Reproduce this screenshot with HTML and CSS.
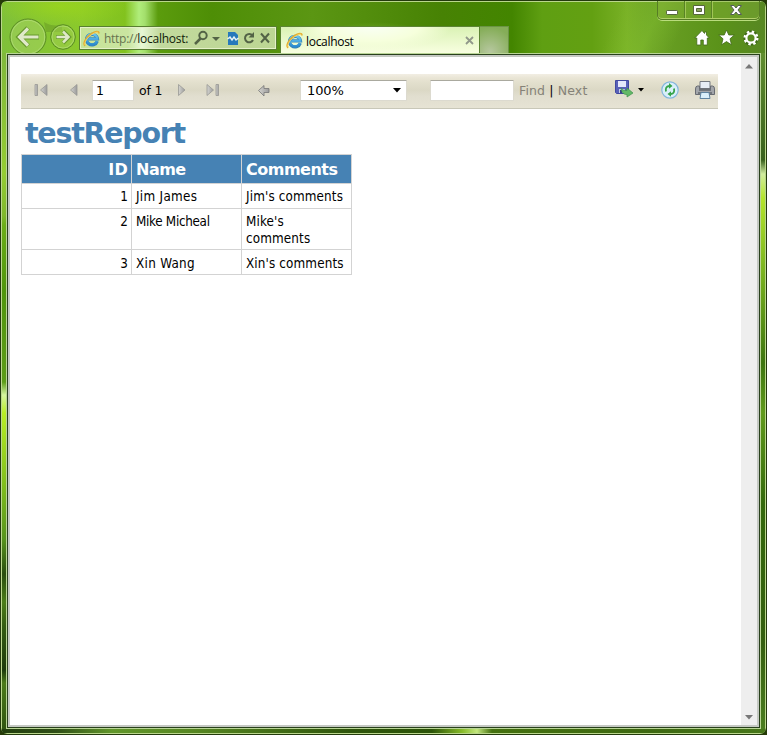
FILE: index.html
```html
<!DOCTYPE html>
<html lang="en">
<head>
<meta charset="utf-8">
<title>localhost</title>
<link rel="stylesheet" href="styles.css">
</head>
<body>
<svg width="0" height="0" class="defs">
  <defs>
    <linearGradient id="ie-blue" x1="0" y1="0" x2="0" y2="1"><stop offset="0" stop-color="#6cc8f2"/><stop offset="1" stop-color="#2b8bd0"/></linearGradient>
    <linearGradient id="metal"><stop offset="0" stop-color="#d4d4d0"/><stop offset="1" stop-color="#9b9b9b"/></linearGradient>
    <symbol id="ie" viewBox="0 0 17 17">
      <path d="M14.300 11.200A5.500 5.300 0 1 1 14.500 8.900H5.400" fill="none" stroke="#3584b7" stroke-width="3.200"/>
      <path d="M14 11A5.300 5.200 0 1 1 14.300 8.900H5.400" fill="none" stroke="url(#ie-blue)" stroke-width="2.200"/>
      <path d="M2.200 15.700C-.5 14 2.500 7.500 8 4 12.500 1 16.200.7 15.800 3.500" fill="none" stroke="#e3ae2e" stroke-width="1.700"/>
      <path d="M2 14.800C1 12.500 4.500 7.500 8.500 4.800 12 2.300 14.800 1.600 15.300 2.700" fill="none" stroke="#ffe379" stroke-width=".7"/>
    </symbol>
  </defs>
</svg>
<div class="window">
  <header class="chrome">
    <nav class="nav">
      <svg class="history" width="70" height="46" viewBox="0 0 70 46">
        <path d="M36 15q8 5 18 3v7H38z" fill="#6a9a25" opacity=".55"/>
        <circle cx="20" cy="30" r="18" fill="#a8d466" fill-opacity=".5" stroke="#598b24"/>
        <circle cx="20" cy="30" r="16.700" fill="none" stroke="#c4e891" stroke-opacity=".5"/>
        <circle cx="55" cy="30" r="12.300" fill="#a0cd52" fill-opacity=".5" stroke="#598b24"/>
        <circle cx="55" cy="30" r="11" fill="none" stroke="#c4e891" stroke-opacity=".5"/>
        <path d="M31 30H12M20 21l-9 9 9 9" fill="none" stroke="#67992c" stroke-width="5"/>
        <path d="M30.500 30H12M20 21.500L11.500 30l8.500 8.500" fill="none" stroke="#dfe9c8" stroke-width="3.200"/>
        <path d="M48 30h12M55 24l6 6-6 6" fill="none" stroke="#67992c" stroke-width="4"/>
        <path d="M48.500 30H60M55 24.500l5.500 5.500-5.500 5.500" fill="none" stroke="#dfe9c8" stroke-width="2.500"/>
      </svg>
      <div class="address">
        <svg width="17" height="17"><use href="#ie"/></svg>
        <span class="url">http://<b>localhost:</b></span>
        <svg class="tools" width="80" height="18" viewBox="0 0 80 18" fill="none" stroke="#536346" stroke-width="2">
          <circle cx="9" cy="6.500" r="3.700"/><path d="M6.500 9.500L1 15" stroke-width="2.500"/>
          <path d="M18 8h8l-4 4z" fill="#536346" stroke="none"/>
          <path d="M34 3h7l3 3v10H34z" fill="#2679bb" stroke="none"/><path d="M33.500 10l2.500-2 2 3 2-3 2 3 2.500-2" stroke="#e5f2f5" stroke-width="1.500"/>
          <path d="M58.500 6.500A4.200 4.200 0 1 0 59 11"/><path d="M60 3v5.500h-5.500z" fill="#536346" stroke="none"/>
          <path d="M67 4.500l8 9M75 4.500l-8 9"/>
        </svg>
      </div>
    </nav>
    <div class="tab">
      <svg width="17" height="17"><use href="#ie"/></svg>
      <span>localhost</span>
      <svg width="9" height="9" viewBox="0 0 9 9"><path d="M1 1l7 7M8 1L1 8" stroke="#91988a" stroke-width="1.800"/></svg>
    </div>
    <div class="new-tab"></div>
    <div class="controls">
      <div class="caption">
        <svg width="103" height="20" viewBox="0 0 103 20">
          <path d="M27.500 0v18M54.500 0v18" stroke="#598326"/><path d="M28.500 0v18M55.500 0v18" stroke="#b5d46c" opacity=".7"/>
          <rect x="9.500" y="10.500" width="11" height="4" rx=".7" fill="#fff" stroke="#56663d"/>
          <path d="M36.500 5.500h11v9h-11z" fill="#fff" stroke="#56663d"/><path d="M39.500 8.500h5v3h-5z" fill="#8da263" stroke="#56663d"/>
          <path d="M73.500 5.500h3.500l2 2.500 2-2.500h3.500l-3.500 4.500 3.500 4.500H81L79 12l-2 2.500h-3.500L77 10z" fill="#fff" stroke="#555e59"/>
        </svg>
      </div>
      <svg class="actions" width="66" height="18" viewBox="0 0 66 18" fill="#fff" stroke="#416b19" stroke-width=".8">
        <path d="M8 1.500L.8 9h2v7h4v-5h2.500v5h4V9h2L12.500 6V3h-2v1.500z"/>
        <path d="M32.500 1l2.300 5h5.500L36 9.800l1.500 6-5-3.200-5 3.200 1.500-6L24.700 6h5.500z"/>
        <circle cx="57" cy="9" r="5.700" fill="none" stroke="#416b19" stroke-width="4"/>
        <circle cx="57" cy="9" r="6.300" fill="none" stroke="#fff" stroke-width="2.400" stroke-dasharray="2.400 2.548"/>
        <circle cx="57" cy="9" r="4.600" fill="none" stroke="#fff" stroke-width="2.200"/>
      </svg>
    </div>
  </header>
  <div class="edge edge-left"></div>
  <div class="viewport">
    <main class="report">
      <div class="toolbar">
        <svg class="pager" width="46" height="16" viewBox="0 0 46 16" fill="url(#metal)" stroke="#989894" stroke-width=".8">
          <path d="M3 2.500h2.500v11H3z"/><path d="M15 2.500v11L8.500 8z"/><path d="M45 2.500v11L38.500 8z"/>
        </svg>
        <div class="field page">1</div>
        <span class="of">of 1</span>
        <svg class="pager-next" width="94" height="16" viewBox="0 0 94 16" fill="url(#metal)" stroke="#989894" stroke-width=".8">
          <path d="M2.500 2.500v11L9 8z"/><path d="M31 2.500v11L37.500 8z"/><path d="M40 2.500h2.500v11H40z"/>
          <path d="M82.500 8.500l5.500-5v3h5v4h-5v3.500z" stroke="#777"/>
        </svg>
        <div class="field zoom"><span>100%</span><svg width="8" height="5" viewBox="0 0 8 5"><path d="M0 0h8L4 4.500z"/></svg></div>
        <div class="field search"></div>
        <span class="find">Find <b>|</b> Next</span>
        <svg class="export" width="104" height="22" viewBox="0 0 104 22">
          <path d="M1.500 1.500h13v13h-12l-1-1z" fill="#5961b8" stroke="#4149a0"/><path d="M4 2h8v6H4z" fill="#e5e8fb"/><path d="M5 10h6v4H5z" fill="#c6cde5"/><path d="M6 11h2v3H6z" fill="#384183"/>
          <path d="M7 9q2 3 6 2.500V9l6 5-6 4v-2.500Q8 16 7 9z" fill="#63b967" stroke="#3c934c" stroke-width=".7"/>
          <path d="M24 9h6l-3 3.500z"/>
          <circle cx="56" cy="11" r="8.200" fill="#d9effa" stroke="#84b6dc" stroke-width="1.200"/>
          <path d="M52 12.500Q51 7.500 55 7M60 9.500Q61 14.500 57 15" fill="none" stroke="#36a44a" stroke-width="1.800"/>
          <path d="M55 4l3.500 3L55 9.800zM57 12.200v5.600L53.500 15z" fill="#36a44a"/>
          <path d="M86 2.500h10v7H86z" fill="#e6edf6" stroke="#737981"/>
          <path d="M81.500 10q0-3 2-3h2v3h11V7h2q2 0 2 3v5.500h-19z" fill="#a2a5aa" stroke="#686c73"/>
          <path d="M85 11h12M84 14h14" stroke="#62676d" stroke-width="1.500"/><path d="M87 13.500h8l1 6H86z" fill="#d9eefa" stroke="#5f83a0"/>
        </svg>
      </div>
      <h1>testReport</h1>
      <table>
        <colgroup><col class="c1"><col class="c1"><col class="c1"></colgroup>
        <tr class="head"><th class="num">ID</th><th>Name</th><th>Comments</th></tr>
        <tr class="row"><td class="num">1</td><td class="name">Jim James</td><td>Jim's comments</td></tr>
        <tr class="row tall"><td class="num">2</td><td class="long-name">Mike Micheal</td><td>Mike's<br>comments</td></tr>
        <tr class="row last"><td class="num">3</td><td class="name">Xin Wang</td><td>Xin's comments</td></tr>
      </table>
    </main>
    <div class="scroll">
      <svg width="8" height="5" viewBox="0 0 8 5"><path d="M0 4.500L4 0l4 4.500z" fill="#777"/></svg>
      <svg width="8" height="5" viewBox="0 0 8 5"><path d="M0 0h8L4 4.500z" fill="#777"/></svg>
    </div>
  </div>
  <div class="edge edge-right"></div>
  <div class="edge edge-bottom"></div>
</div>
</body>
</html>
```

FILE: styles.css
```css
* { box-sizing: border-box; }
body { margin: 0; width: 767px; height: 735px; overflow: hidden; background: #263b08; font-family: "DejaVu Sans", sans-serif; color: #000; }
svg { display: block; flex: none; }
.defs { position: absolute; }
.window {
  width: 767px; height: 735px; display: grid;
  grid-template: 51px 676px 4px / 4px 755px 4px;
  border: 1px solid #233b0c; border-radius: 7px; overflow: hidden;
  box-shadow: inset 0 0 0 1px #bad68c; padding: 1px;
  background: linear-gradient(#629d1b, #395d12);
}
.chrome {
  grid-column: 1 / -1; display: flex; position: relative;
  background:
    radial-gradient(ellipse 80px 34px at 373px 54px, #d5f59c, #8fcb4299 50%, transparent),
    radial-gradient(ellipse 70px 20px at 57px 4px, #a4dd1288, transparent),
    linear-gradient(115deg, transparent 79%, #87c53266 84%, transparent 88%),
    linear-gradient(90deg, #7fc03a, #8bc92b 80px, #82c21e 123px, #b0ed7b 137px, #a3df6c 143px, #5b9c0d 156px, #4e8e06 210px, #5b9613 310px, #478204 440px, #438500 510px, #5f9f12 540px, #63a012 590px, #79b126 625px, #6aa024 650px, #5a9219 720px, #578722);
}
.nav { display: flex; width: 275px; }
.history { margin: 5px 0 0 6px; }
.address {
  display: flex; align-items: center; width: 198px; height: 24px; margin: 24px 0 0 1px; padding-left: 3px;
  border: 1px solid #587f30; box-shadow: inset 0 0 0 1px #e4f1c8;
  background: linear-gradient(90deg, #c7e398, #c9e5a0 48px, #e8f8d5 62px, #c2d99d 80px, #bcd693);
}
.url { width: 88px; margin: 2px 0 0 4px; white-space: nowrap; font: 12px/20px "Open Sans", sans-serif; color: #66734f; letter-spacing: -.27px; }
.url b { font-weight: 400; color: #101a08; }
.tools { margin-left: 2px; }
.tab {
  display: flex; align-items: center; width: 200px; height: 27px; margin: 24px 0 0 3px; padding: 0 5px;
  border: 1px solid #5c8434; border-bottom: 0;
  background: radial-gradient(ellipse 80px 24px at 90px 0, #f9fff4, #f6ffdc 60%, transparent), linear-gradient(#daf2b5, #f8ffe0);
  font: 12px/22px "Open Sans", sans-serif;
}
.tab span { flex: 1; margin: 3px 0 0 3px; letter-spacing: -.3px; }
.new-tab { width: 29px; height: 27px; margin-top: 24px; border: 1px solid #6b9445; border-left: 0; border-bottom: 0; background: radial-gradient(circle at 10px 25px, #b7c8a0, #85ad58 80%); }
.controls { flex: 1; }
.caption { width: 103px; height: 19px; margin: -1px 0 0 148px; border: 1px solid #567d25; border-top: 0; border-radius: 0 0 5px 5px; box-shadow: 0 1px #b9dc7d, inset 0 -1px #b0cf68; background: #89b33c66; overflow: hidden; }
.caption svg { margin: -1px 0 0 -1px; }
.actions { margin: 9px 0 0 185px; }
.edge-left { background: linear-gradient(#80b83b, #94cd32 120px, #7fb82c 163px, #6bae18 172px, #4f960b 237px, #5c9c18 329px, #d5f5a0 342px, #b7ee25 360px, #7fbd1c 433px, #57941c 486px, #2a4d10 521px, #4b7d19 549px, #345d11 573px, #1d3a0c 617px, #4c7a1a 630px, #2f5510); }
.edge-right { background: linear-gradient(#618e2f, #39611d 107px, #d1eca0 121px, #b4e52c 145px, #80b921 210px, #3e7510 310px, #619b1c 360px, #34690c 450px, #355f10 590px, #4c7e20); }
.edge-bottom { grid-column: 1 / -1; background: linear-gradient(90deg, #223e0e, #304f17 55px, #61962a 110px, #578722 190px, #2e540b 350px, #2c5408 430px, #87bb29 460px, #c3e77e 475px, #44700e 490px, #3d6811 650px, #47771a); }
.viewport { display: flex; border: 1px solid #b9d596; box-shadow: inset 0 0 0 1px #29411c, inset 0 0 0 3px #c5c9c3; background: #fff; padding: 2px; }
.report { width: 732px; padding: 18px 0 0 12px; }
.scroll { flex: 1; display: flex; flex-direction: column; justify-content: space-between; align-items: center; margin: 1px 1px 1px 0; padding: 7px 0 5px; background: #eee; }
.toolbar {
  display: flex; align-items: center; width: 697px; height: 35px; padding: 0 0 2px 11px;
  border-bottom: 1px solid #c8c7b8;
  background: linear-gradient(#f2eee3, #e9e5d5 4px, #e3e0ce 8px, #dbd8c5 16px, #e1decf 22px, #e6e3d4);
  font-size: 13px;
}
.field { height: 21px; padding-left: 4px; line-height: 20px; background: #fff; border: 1px solid #dcdacf; border-top-color: #aaa99f; border-radius: 1px; }
.page { width: 42px; margin-left: 14px; padding-left: 3px; font-size: 12.5px; }
.of { width: 36px; padding: 1px 0 0 5px; white-space: nowrap; font-size: 12.5px; letter-spacing: -.2px; }
.pager-next { margin-left: 6px; }
.zoom { display: flex; align-items: center; justify-content: space-between; width: 107px; margin-left: 30px; padding: 0 5px 0 6px; letter-spacing: -.1px; }
.zoom span { padding-top: 2px; }
.search { width: 84px; margin-left: 23px; }
.find { width: 74px; margin-left: 5px; padding-top: 1px; color: #858278; font-size: 12.5px; letter-spacing: .14px; white-space: nowrap; }
.find b { font-weight: 400; color: #000; }
.export { margin-left: 21px; }
h1 { height: 45px; margin: 0; padding-left: 4px; font: bold 28.5px/49px "DejaVu Sans", sans-serif; letter-spacing: -1.25px; color: #4682b4; }
table { width: 331px; table-layout: fixed; border-collapse: collapse; }
.c1 { width: 110px; }
th, td { padding: 0 3px 0 4px; border: 1px solid #d3d3d3; text-align: left; vertical-align: top; }
.head { height: 29px; background: #4682b4; color: #fff; font-size: 16px; }
th { padding-top: 2px; line-height: 26px; letter-spacing: -.5px; }
th.num { letter-spacing: .3px; }
.row { height: 25px; font-family: "DejaVu Sans Condensed", "DejaVu Sans", sans-serif; font-size: 13.33px; }
.row td { padding-top: 4px; line-height: 17px; letter-spacing: .14px; white-space: nowrap; }
.row .name { letter-spacing: .3px; }
.row .long-name { letter-spacing: -.3px; }
.tall { height: 41px; }
.row.last td { padding-top: 5px; }
th.num, td.num { text-align: right; }
```
